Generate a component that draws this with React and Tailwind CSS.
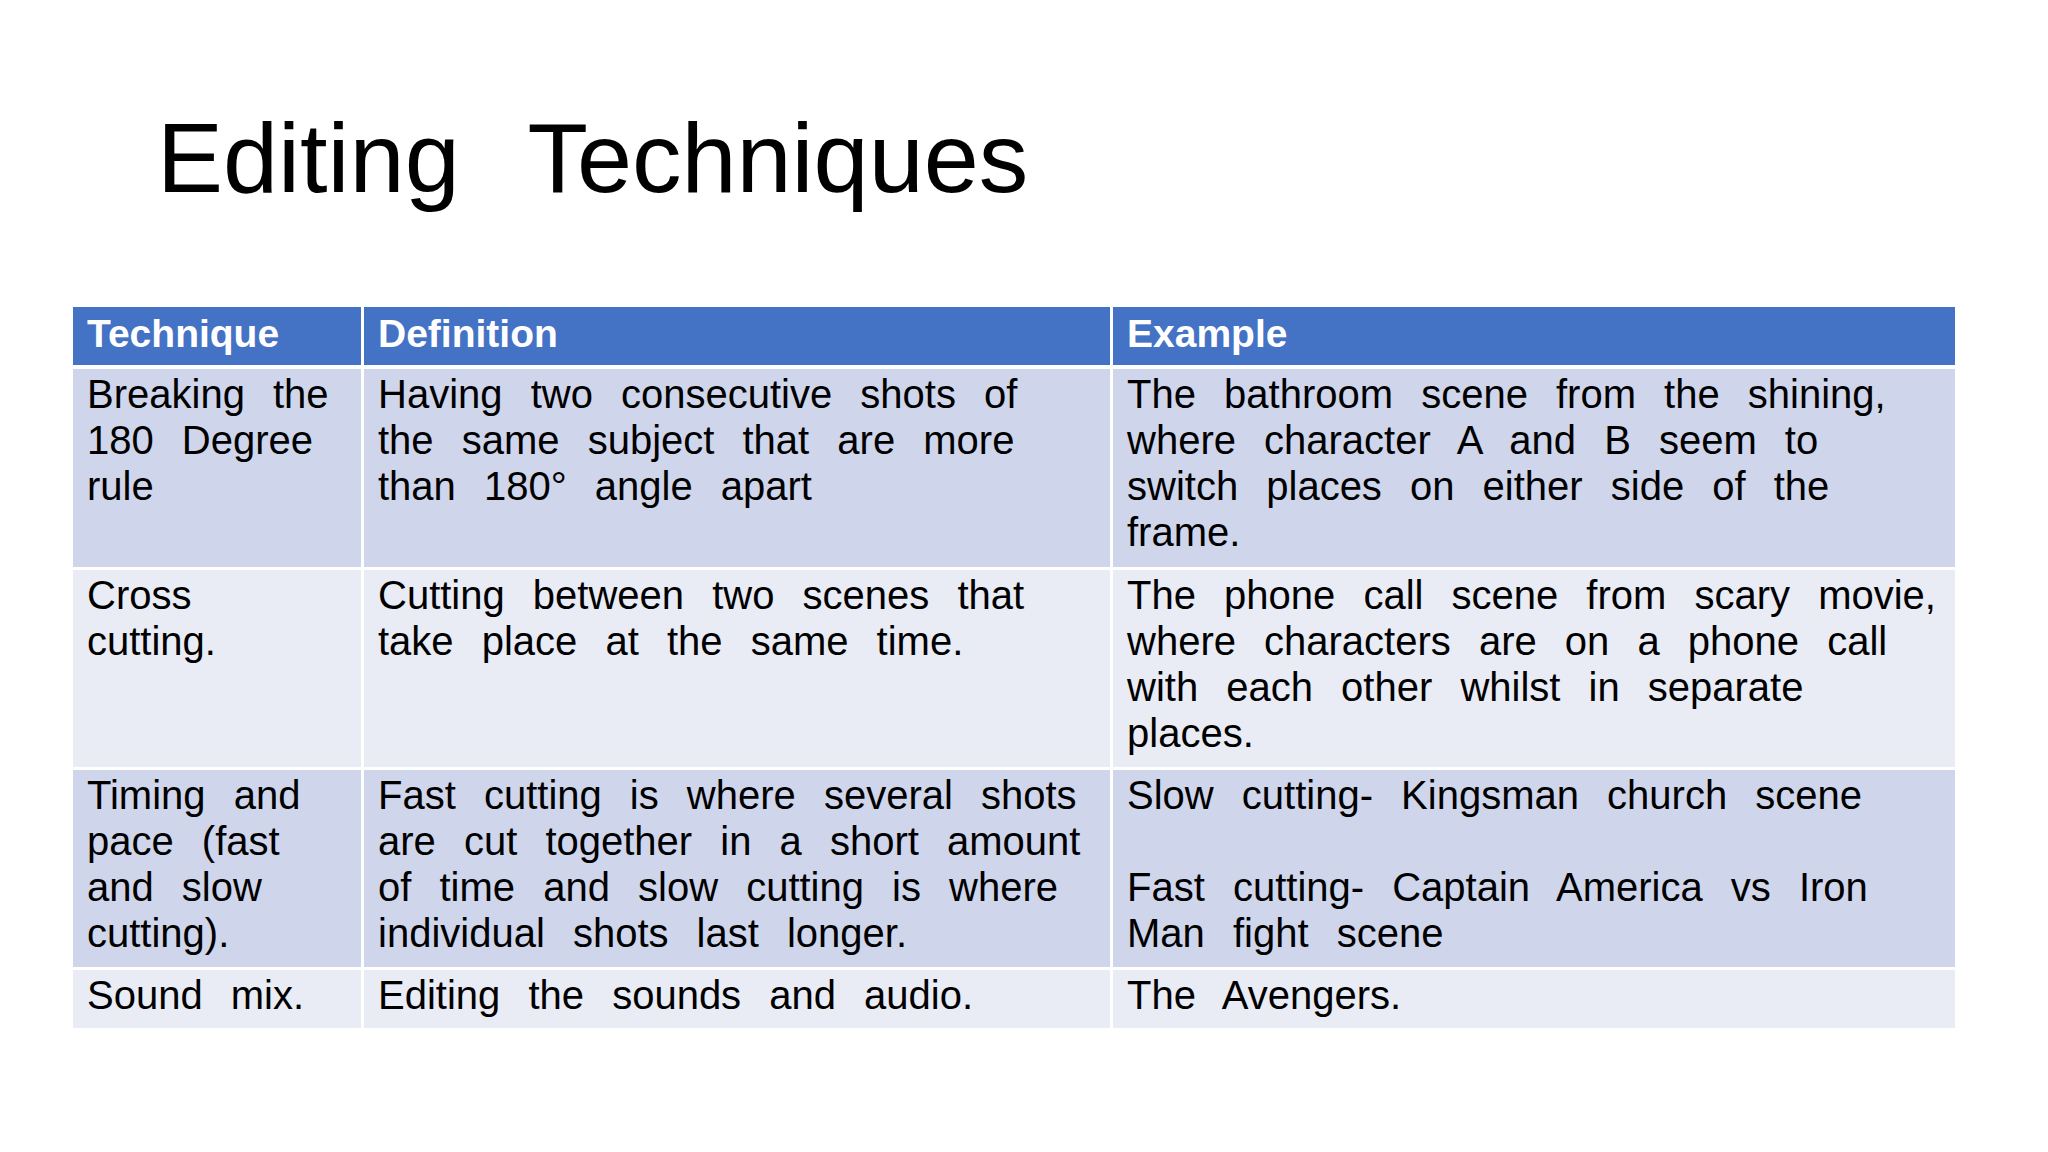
const rows = [
  {
    bg: "bg-[#cfd5ea]",
    h: "h-[198px]",
    cells: [
      ["Breaking the", "180 Degree", "rule"],
      ["Having two consecutive shots of", "the same subject that are more", "than 180° angle apart"],
      ["The bathroom scene from the shining,", "where character A and B seem to", "switch places on either side of the", "frame."],
    ],
  },
  {
    bg: "bg-[#e9ebf5]",
    h: "h-[197px]",
    cells: [
      ["Cross", "cutting."],
      ["Cutting between two scenes that", "take place at the same time."],
      ["The phone call scene from scary movie,", "where characters are on a phone call", "with each other whilst in separate", "places."],
    ],
  },
  {
    bg: "bg-[#cfd5ea]",
    h: "h-[197px]",
    cells: [
      ["Timing and", "pace (fast", "and slow", "cutting)."],
      ["Fast cutting is where several shots", "are cut together in a short amount", "of time and slow cutting is where", "individual shots last longer."],
      ["Slow cutting- Kingsman church scene", "\u00a0", "Fast cutting- Captain America vs Iron", "Man fight scene"],
    ],
  },
  {
    bg: "bg-[#e9ebf5]",
    h: "h-[58px]",
    cells: [["Sound mix."], ["Editing the sounds and audio."], ["The Avengers."]],
  },
];

export default function App() {
  return (
    <div className="w-[2048px] h-[1152px] bg-white overflow-hidden font-['Liberation_Sans',Arial,sans-serif] text-black">
      <div className="pt-[108px] pl-[157px] text-[99px] leading-none [word-spacing:42px] whitespace-nowrap">
        Editing Techniques
      </div>
      <div className="mt-[100px] ml-[73px] w-[1882px]">
        <div className="grid grid-cols-[288px_746px_842px] gap-x-[3px] mb-[4px]">
          {["Technique", "Definition", "Example"].map((t) => (
            <div
              key={t}
              className="h-[58px] bg-[#4472c4] text-white font-bold text-[39px] leading-[46px] pl-[14px] pt-[4px] whitespace-nowrap"
            >
              {t}
            </div>
          ))}
        </div>
        <div className="grid grid-cols-[288px_746px_842px] gap-x-[3px] gap-y-[3px]">
          {rows.map((r, ri) =>
            r.cells.map((lines, ci) => (
              <div
                key={ri + "-" + ci}
                className={`${r.bg} ${r.h} text-[40px] leading-[46px] pl-[14px] pt-[2px] [word-spacing:17px]`}
              >
                {lines.map((l, li) => (
                  <div key={li} className="whitespace-nowrap">
                    {l}
                  </div>
                ))}
              </div>
            ))
          )}
        </div>
      </div>
    </div>
  );
}
